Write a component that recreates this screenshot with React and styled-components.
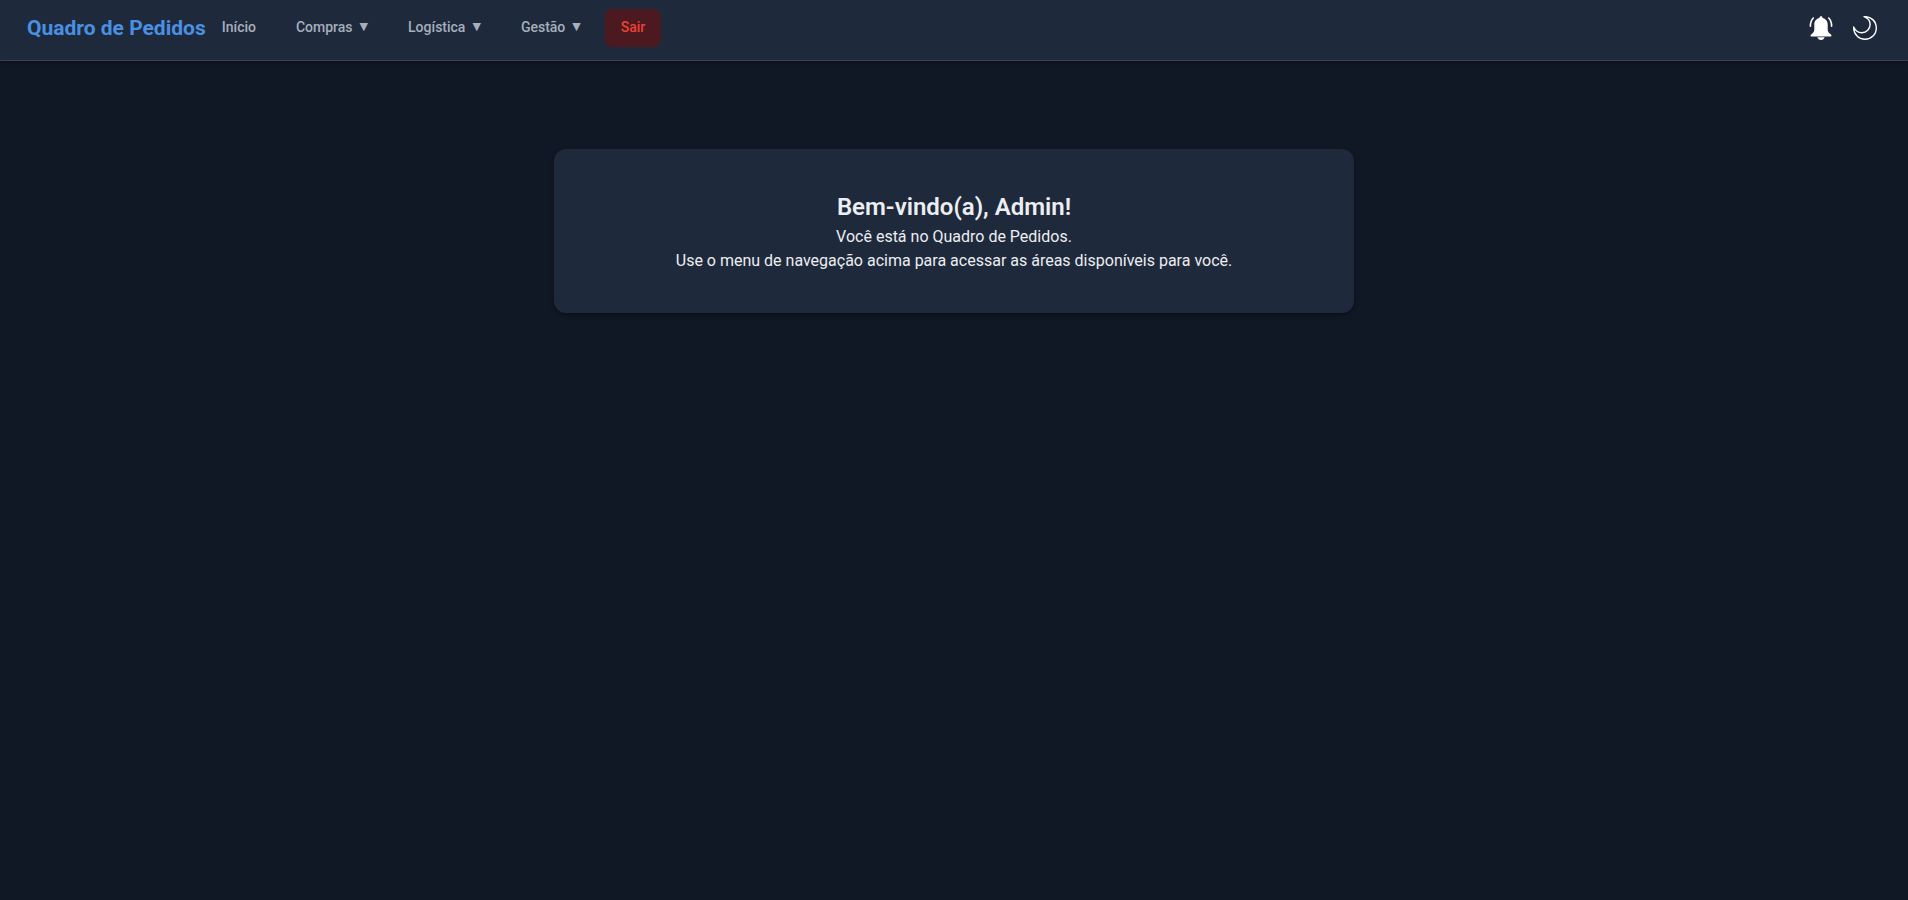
import React from "react";
import styled, { createGlobalStyle } from "styled-components";

const GlobalStyle = createGlobalStyle`
  * { box-sizing: border-box; }
  body {
    margin: 0;
    min-height: 100vh;
    background: #111825;
    color: #eceef2;
    font-family: Roboto, "Liberation Sans", sans-serif;
    font-size: 16px;
    line-height: 24px;
  }
`;

const Header = styled.header`
  display: flex;
  align-items: flex-start;
  justify-content: space-between;
  padding: 9px 24px 13px 27px;
  background: #1e293b;
  border-bottom: 1px solid #374151;
  box-shadow: 0 2px 4px rgba(0, 0, 0, 0.3);
`;

const Group = styled.div`
  display: flex;
  align-items: center;
  gap: ${({ $gap }) => $gap};
`;

const Brand = styled.a`
  color: #4a90e2;
  font-size: 21px;
  font-weight: 700;
  text-decoration: none;
  white-space: nowrap;
`;

const Nav = styled.nav`
  display: flex;
  gap: 8px;
`;

const NavButton = styled.button`
  display: flex;
  align-items: center;
  gap: 7px;
  height: 38px;
  padding: 0 16px 2px;
  border: 0;
  border-radius: 8px;
  background: ${({ $danger }) => ($danger ? "#4c1920" : "transparent")};
  color: ${({ $danger }) => ($danger ? "#ea4335" : "#a5afbd")};
  font: 500 14px/20px Roboto, "Liberation Sans", sans-serif;
  white-space: nowrap;
  cursor: pointer;
`;

const Caret = styled.span`
  font: 11px/20px "DejaVu Sans", sans-serif;
`;

const IconButton = styled.button`
  display: flex;
  padding: 7px;
  border: 0;
  background: transparent;
  color: #ffffff;
  cursor: pointer;
`;

const Main = styled.main`
  padding: 88px 24px 24px;
`;

const Card = styled.section`
  max-width: 800px;
  margin: 0 auto;
  padding: 40px;
  border-radius: 12px;
  background: #1e293b;
  box-shadow: 0 2px 4px rgba(0, 0, 0, 0.4);
  text-align: center;
`;

const Title = styled.h1`
  margin: 0;
  font-size: 24px;
  font-weight: 600;
  line-height: 36px;
`;

const Text = styled.p`
  margin: 0;
`;

const menus = ["Compras", "Logística", "Gestão"];

function BellIcon() {
  return (
    <svg width="24" height="24" viewBox="0 0 24 24" fill="currentColor" aria-hidden="true">
      <path d="M12 .2c-.9 0-1.500.6-1.500 1.400v.4C7.400 2.600 5.300 5.100 5.300 8.200v5.400c0 1.900-.8 3.200-2.600 4.500-.8.6-1.200 1-1.200 1.600 0 .4.3.7.7.7h19.600c.4 0 .7-.3.7-.7 0-.6-.4-1-1.200-1.600-1.800-1.300-2.600-2.600-2.600-4.500V8.200c0-3.100-2.100-5.600-5.200-6.200v-.4c0-.8-.6-1.400-1.500-1.400z" />
      <path d="M8.400 21.300h7.200c-.3 1.600-1.800 2.600-3.600 2.600s-3.300-1-3.600-2.600z" />
      <path
        d="M4.300 2C2.300 3.900 1.400 6.600 1.400 10.200M19.700 2c2 1.900 2.900 4.600 2.900 8.200"
        fill="none"
        stroke="currentColor"
        strokeWidth="1.600"
        strokeLinecap="round"
      />
    </svg>
  );
}

function MoonIcon() {
  return (
    <svg width="24" height="24" viewBox="0 0 24 24" fill="none" aria-hidden="true">
      <path
        d="M11 .7C18 .2 23.300 5.200 23.300 12c0 6.400-5 11.300-11.300 11.300C5.600 23.300.5 18 .7 11c1.600 3.600 4.500 5.700 8 5.700 4.800 0 8.400-3.600 8.400-8.200C17.100 5 14.800 2.100 11 .7z"
        stroke="currentColor"
        strokeWidth="1.400"
        strokeLinejoin="round"
      />
    </svg>
  );
}

export default function App() {
  return (
    <>
      <GlobalStyle />
      <Header>
        <Group $gap="0">
          <Brand href="#">Quadro de Pedidos</Brand>
          <Nav>
            <NavButton type="button">Início</NavButton>
            {menus.map((label) => (
              <NavButton type="button" key={label} aria-haspopup="true">
                {label}
                <Caret aria-hidden="true">▼</Caret>
              </NavButton>
            ))}
            <NavButton type="button" $danger>Sair</NavButton>
          </Nav>
        </Group>
        <Group $gap="6px">
          <IconButton type="button" aria-label="Notificações">
            <BellIcon />
          </IconButton>
          <IconButton type="button" aria-label="Alternar tema">
            <MoonIcon />
          </IconButton>
        </Group>
      </Header>
      <Main>
        <Card>
          <Title>Bem-vindo(a), Admin!</Title>
          <Text>Você está no Quadro de Pedidos.</Text>
          <Text>Use o menu de navegação acima para acessar as áreas disponíveis para você.</Text>
        </Card>
      </Main>
    </>
  );
}
